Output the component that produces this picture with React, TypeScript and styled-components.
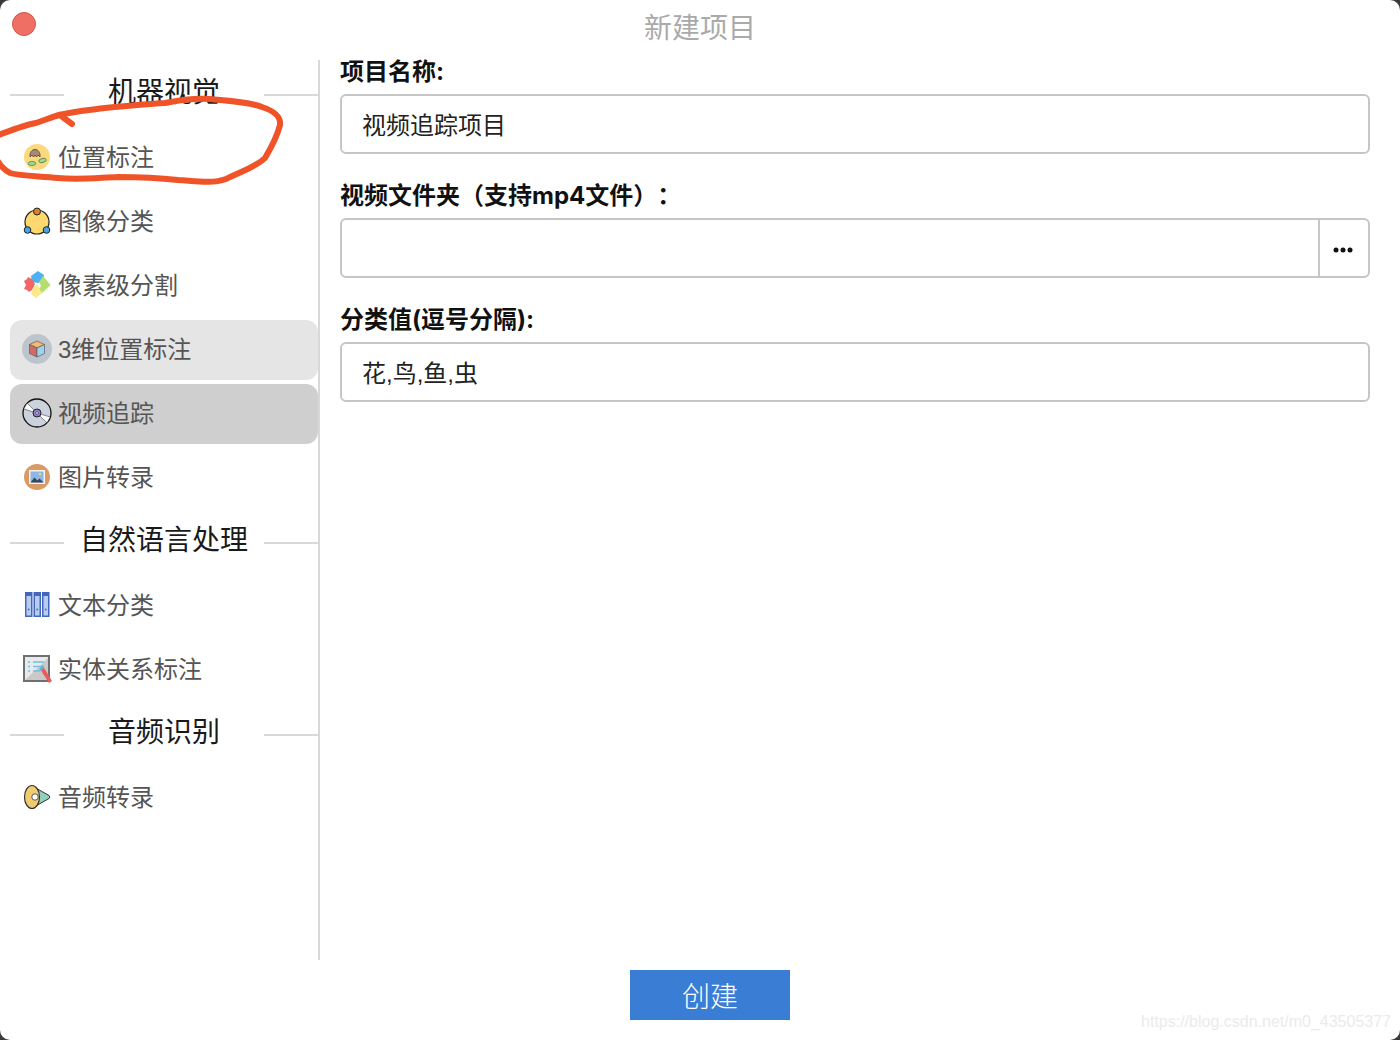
import { FC, ReactNode } from "react";
import styled, { createGlobalStyle } from "styled-components";

const FONT = `"Liberation Sans", "Noto Sans CJK SC", sans-serif`;

const GlobalStyle = createGlobalStyle`
  html, body {
    margin: 0;
    padding: 0;
    background: #3a3a3a;
  }
  * {
    box-sizing: border-box;
    text-spacing-trim: space-all;
  }
`;

const FaceIcon = () => (
  <svg width="30" height="30" viewBox="0 0 30 30">
    <circle cx="15" cy="15" r="13" fill="#fbd97f" />
    <path d="M8 15c-1-10 11-10 10 0l-2-2-1.500 2-1.500-2-1.500 2-1.500-2z" fill="#a58a78" stroke="#5c4a42" strokeWidth="0.900" />
    <ellipse cx="10" cy="21.500" rx="3.800" ry="2" fill="#9fdc8c" stroke="#4d7d50" strokeWidth="0.800" />
    <ellipse cx="20.500" cy="18.500" rx="3.800" ry="2" fill="#9fdc8c" stroke="#4d7d50" strokeWidth="0.800" transform="rotate(-15 20.500 18.500)" />
  </svg>
);

const NodesIcon = () => (
  <svg width="30" height="30" viewBox="0 0 30 30">
    <circle cx="15" cy="16" r="12" fill="#fbd96e" stroke="#222" strokeWidth="1.200" />
    <circle cx="15" cy="5.500" r="3.500" fill="#d9822b" stroke="#222" strokeWidth="1" />
    <circle cx="5.500" cy="24" r="3.300" fill="#4aa3e8" stroke="#222" strokeWidth="1" />
    <circle cx="24.500" cy="24" r="3.300" fill="#4aa3e8" stroke="#222" strokeWidth="1" />
  </svg>
);

const PuzzleIcon = () => (
  <svg width="30" height="30" viewBox="0 0 30 30">
    <path d="M9 6l7-5 6 4-1 6-5 2-6-1z" fill="#4cb1f5" />
    <path d="M17 12l4-6 7.500 9-9.500 9-3-4 3-4z" fill="#b5de6e" />
    <path d="M2 11l3-2 1-2 4 2 3 5-3 6-3 2-2-2-3-1 2-4z" fill="#f26666" />
    <path d="M11 18l4-4 5 9-6 5-5-4 1-2z" fill="#fbe98a" />
  </svg>
);

const CubeIcon = () => (
  <svg width="30" height="30" viewBox="0 0 30 30">
    <circle cx="15" cy="15" r="15" fill="#bcc4cc" />
    <path d="M15 7l7.500 3.500L15 14 7.500 10.500z" fill="#f5b971" stroke="#5b5b5b" strokeWidth="0.700" />
    <path d="M7.500 10.500L15 14v9l-7.500-3.500z" fill="#cf6b66" stroke="#5b5b5b" strokeWidth="0.700" />
    <path d="M22.500 10.500L15 14v9l7.500-3.500z" fill="#9dd2f0" stroke="#5b5b5b" strokeWidth="0.700" />
  </svg>
);

const DiscIcon = () => (
  <svg width="30" height="30" viewBox="0 0 30 30">
    <circle cx="15" cy="15" r="14" fill="#cbd2de" stroke="#111" strokeWidth="1.300" />
    <path d="M15 15L1.800 11 5 5.200zM15 15l13.200 4L25 24.800z" fill="#fff" stroke="#222" strokeWidth="0.500" />
    <circle cx="15" cy="15" r="4" fill="#8f7fd0" stroke="#222" strokeWidth="1" />
    <circle cx="15" cy="15" r="1.300" fill="#fff" stroke="#222" strokeWidth="0.600" />
  </svg>
);

const PhotoIcon = () => (
  <svg width="30" height="30" viewBox="0 0 30 30">
    <circle cx="15" cy="15" r="13" fill="#d99a63" />
    <rect x="7" y="8" width="16" height="14" fill="#f3f3f3" />
    <rect x="8.500" y="9.500" width="13" height="11" fill="#8fb7e2" />
    <path d="M8.500 20.500l4-5 3 3 2-2 4 4z" fill="#33475f" />
    <circle cx="18" cy="12" r="1.300" fill="#f5d36b" />
  </svg>
);

const BindersIcon = () => (
  <svg width="30" height="30" viewBox="0 0 30 30">
    <g fill="#4267bd">
      <rect x="3" y="2" width="7.500" height="25" />
      <rect x="11.500" y="2" width="7.500" height="25" />
      <rect x="20" y="2" width="7.500" height="25" />
    </g>
    <g fill="#b7cdf0">
      <rect x="4.500" y="6" width="4.500" height="19.500" />
      <rect x="13" y="6" width="4.500" height="19.500" />
      <rect x="21.500" y="6" width="4.500" height="19.500" />
    </g>
    <g fill="#4267bd">
      <circle cx="6.700" cy="19.500" r="0.900" />
      <circle cx="15.200" cy="19.500" r="0.900" />
      <circle cx="23.700" cy="19.500" r="0.900" />
    </g>
  </svg>
);

const BoardIcon = () => (
  <svg width="30" height="30" viewBox="0 0 30 30">
    <rect x="2" y="2" width="25" height="25" fill="#e6eaee" stroke="#6f6f6f" strokeWidth="2" />
    <path d="M3 26L26 4v22z" fill="#c9c9c9" />
    <g stroke="#6ec0e6" strokeWidth="1.500">
      <path d="M6 8h2M6 12.500h2M6 17h2" />
      <path d="M11 8h11M11 12.500h9M11 17h7" />
    </g>
    <path d="M18 15l3-3 9 15-3 2z" fill="#ea5a5a" />
    <path d="M17 15l4-4 1 3-3 3z" fill="#6aaed6" />
  </svg>
);

const HornIcon = () => (
  <svg width="30" height="30" viewBox="0 0 30 30">
    <path d="M12 5l15 8.500a2 2 0 010 3L12 25z" fill="#8fd0c0" stroke="#333" strokeWidth="1" />
    <ellipse cx="10" cy="15" rx="7.500" ry="11.500" fill="#f0cc70" stroke="#333" strokeWidth="1.200" />
    <circle cx="13" cy="15" r="3.200" fill="#fff" stroke="#333" strokeWidth="0.800" />
  </svg>
);

type ItemProps = {
  icon: ReactNode;
  label: string;
  state?: "hover" | "active";
};

const SideItem: FC<ItemProps> = ({ icon, label, state }) => (
  <Item $state={state}>
    <IconBox>{icon}</IconBox>
    <ItemText>{label}</ItemText>
  </Item>
);

const SideHeader: FC<{ label: string }> = ({ label }) => (
  <Header>
    <HeaderLine />
    <HeaderText>{label}</HeaderText>
    <HeaderLine />
  </Header>
);

export default function App() {
  return (
    <>
      <GlobalStyle />
      <Window>
        <TitleBar>
          <CloseDot />
          <Title>新建项目</Title>
        </TitleBar>
        <Body>
          <Sidebar>
            <SideHeader label="机器视觉" />
            <SideItem icon={<FaceIcon />} label="位置标注" />
            <SideItem icon={<NodesIcon />} label="图像分类" />
            <SideItem icon={<PuzzleIcon />} label="像素级分割" />
            <SideItem icon={<CubeIcon />} label="3维位置标注" state="hover" />
            <SideItem icon={<DiscIcon />} label="视频追踪" state="active" />
            <SideItem icon={<PhotoIcon />} label="图片转录" />
            <SideHeader label="自然语言处理" />
            <SideItem icon={<BindersIcon />} label="文本分类" />
            <SideItem icon={<BoardIcon />} label="实体关系标注" />
            <SideHeader label="音频识别" />
            <SideItem icon={<HornIcon />} label="音频转录" />
          </Sidebar>
          <Form>
            <Field>
              <Label>项目名称:</Label>
              <Input readOnly value="视频追踪项目" />
            </Field>
            <Field>
              <Label>视频文件夹（支持mp4文件）：</Label>
              <FileBox>
                <FileInput readOnly value="" />
                <BrowseButton>
                  <svg width="20" height="6" viewBox="0 0 20 6">
                    <circle cx="3" cy="3" r="2.500" fill="#111" />
                    <circle cx="10" cy="3" r="2.500" fill="#111" />
                    <circle cx="17" cy="3" r="2.500" fill="#111" />
                  </svg>
                </BrowseButton>
              </FileBox>
            </Field>
            <Field>
              <Label>分类值(逗号分隔):</Label>
              <Input readOnly value="花,鸟,鱼,虫" />
            </Field>
          </Form>
        </Body>
        <Footer>
          <CreateButton>创建</CreateButton>
        </Footer>
        <Watermark>https://blog.csdn.net/m0_43505377</Watermark>
        <Scribble width="290" height="190" viewBox="0 0 290 190">
          <path
            d="M-4 136C12 130 24 125 36 123C45 120 52 117 59 115C75 111 90 110 105 108C125 106 145 104 165 103C180 100 195 98 210 99C230 101 250 102 262 107C274 111 281 116 280 125C277 137 271 148 265 158C256 167 240 172 226 179C212 184 195 181 178 180C160 178 140 177 118 177C95 178 78 180 58 178C38 176 20 176 10 173C3 169 0 165 -3 160"
            fill="none"
            stroke="#f05327"
            strokeWidth="6"
            strokeLinecap="round"
            strokeLinejoin="round"
          />
          <path d="M60 115L72 124" fill="none" stroke="#f05327" strokeWidth="6" strokeLinecap="round" />
        </Scribble>
      </Window>
    </>
  );
}

const Window = styled.div`
  position: relative;
  display: flex;
  flex-direction: column;
  width: 1400px;
  height: 1040px;
  border-radius: 10px;
  overflow: hidden;
  background: #fff;
  font-family: ${FONT};
`;

const TitleBar = styled.div`
  display: grid;
  grid-template-columns: 1fr auto 1fr;
  height: 54px;
  padding-top: 12px;
`;

const CloseDot = styled.span`
  width: 24px;
  height: 24px;
  margin-left: 12px;
  border-radius: 50%;
  background: #ef6f65;
  border: 1px solid #d0574d;
`;

const Title = styled.div`
  margin-top: 1px;
  font-size: 28px;
  line-height: 32px;
  color: #aaaaaa;
`;

const Body = styled.div`
  display: flex;
  height: 906px;
`;

const Sidebar = styled.div`
  display: flex;
  flex-direction: column;
  gap: 4px;
  width: 320px;
  height: 900px;
  margin-top: 6px;
  padding: 4px 0 0 10px;
  border-right: 2px solid #d8d8d8;
`;

const Header = styled.div`
  display: flex;
  align-items: center;
  height: 60px;
  flex-shrink: 0;
`;

const HeaderLine = styled.span`
  width: 54px;
  height: 2px;
  margin-top: 2px;
  background: #d8d8d8;
`;

const HeaderText = styled.span`
  flex: 1;
  margin-bottom: 2px;
  text-align: center;
  font-size: 28px;
  line-height: 36px;
  color: #1a1a1a;
`;

const Item = styled.div<{ $state?: "hover" | "active" }>`
  display: flex;
  align-items: center;
  gap: 6px;
  height: 60px;
  flex-shrink: 0;
  padding-left: 12px;
  border-radius: 12px;
  font-size: 24px;
  color: #555;
  background: ${({ $state }) =>
    $state === "active" ? "#cfcfcf" : $state === "hover" ? "#e5e5e5" : "transparent"};
`;

const ItemText = styled.span`
  margin-bottom: 6px;
`;

const IconBox = styled.span`
  display: flex;
  width: 30px;
  height: 30px;
  margin-bottom: 2px;
`;

const Form = styled.div`
  display: flex;
  flex-direction: column;
  gap: 25px;
  flex: 1;
  padding: 1px 30px 0 20px;
`;

const Field = styled.div`
  display: flex;
  flex-direction: column;
  gap: 5px;
`;

const Label = styled.label`
  font-family: Inter, "Noto Sans CJK SC", sans-serif;
  font-size: 24px;
  font-weight: 700;
  line-height: 34px;
  color: #111;
`;

const Input = styled.input`
  width: 100%;
  height: 60px;
  padding: 0 20px 2px;
  border: 2px solid #c6c6c6;
  border-radius: 6px;
  outline: none;
  font-family: ${FONT};
  font-size: 24px;
  color: #222;
  background: #fff;
`;

const FileBox = styled.div`
  display: flex;
  height: 60px;
  border: 2px solid #c6c6c6;
  border-radius: 6px;
`;

const FileInput = styled.input`
  flex: 1;
  min-width: 0;
  border: none;
  outline: none;
  background: transparent;
`;

const BrowseButton = styled.button`
  display: flex;
  align-items: center;
  justify-content: center;
  width: 50px;
  padding: 4px 2px 0 0;
  border: none;
  border-left: 2px solid #c6c6c6;
  background: transparent;
`;

const Footer = styled.div`
  display: flex;
  justify-content: center;
  padding: 10px 0 0 20px;
`;

const CreateButton = styled.button`
  width: 160px;
  height: 50px;
  border: none;
  background: #3a7dd4;
  color: #fff;
  font-family: ${FONT};
  font-size: 28px;
  font-weight: 300;
`;

const Watermark = styled.span`
  position: absolute;
  right: 9px;
  bottom: 9px;
  font-family: "Liberation Sans", sans-serif;
  font-size: 16px;
  color: #ebebeb;
`;

const Scribble = styled.svg`
  position: absolute;
  top: 0;
  left: 0;
  pointer-events: none;
`;
